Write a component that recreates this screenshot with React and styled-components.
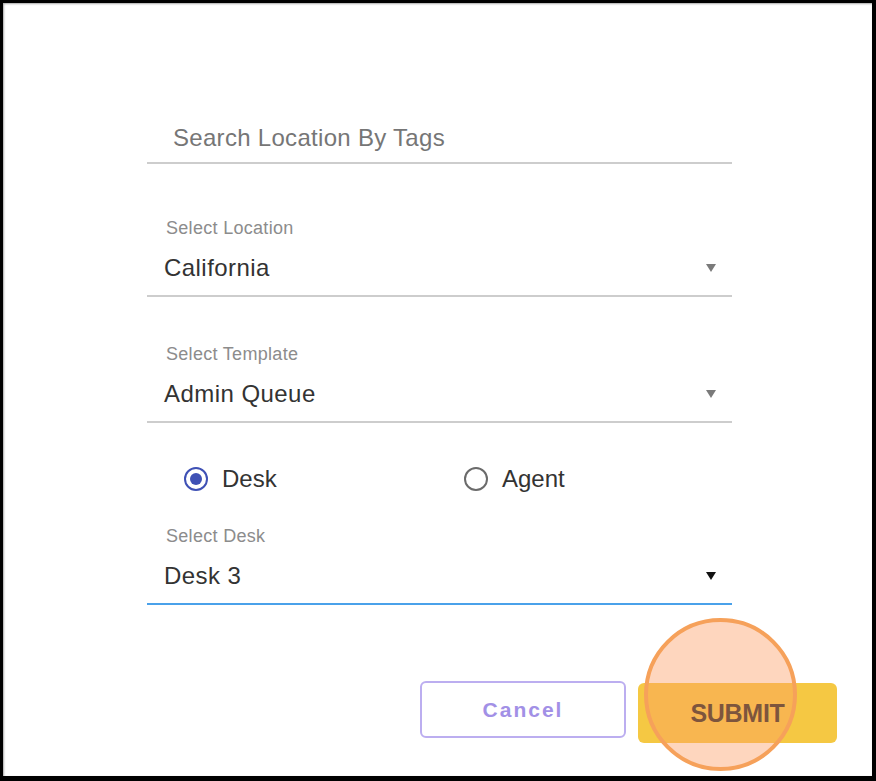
import React, { useState } from "react";
import styled, { createGlobalStyle } from "styled-components";

const GlobalStyle = createGlobalStyle`
  html, body {
    margin: 0;
    padding: 0;
    background: #fff;
  }
  * {
    box-sizing: border-box;
  }
`;

const Frame = styled.div`
  width: 876px;
  height: 781px;
  border-style: solid;
  border-color: #000;
  border-width: 3px 4px 5px 3px;
  box-shadow: inset 1px 1px 2px rgba(0, 0, 0, 0.35);
  background: #fff;
  font-family: "Liberation Sans", Arial, sans-serif;
  display: flex;
  flex-direction: column;
`;

const Form = styled.div`
  margin-left: 144px;
  width: 585px;
  padding-top: 121px;
  display: flex;
  flex-direction: column;
`;

const SearchField = styled.div`
  padding: 0 0 10px 26px;
  border-bottom: 2px solid #cdcdcd;
  height: 40px;
  font-size: 24px;
  line-height: 28px;
  letter-spacing: 0.3px;
  color: #767676;
`;

const Field = styled.div`
  margin-top: ${(p) => p.$gap}px;
  padding-bottom: 13px;
  border-bottom: 2px solid ${(p) => (p.$focused ? "#4aa1ea" : "#cdcdcd")};
`;

const Label = styled.div`
  padding-left: 19px;
  height: 20px;
  font-size: 18px;
  line-height: 20px;
  letter-spacing: 0.3px;
  color: #8c8c8c;
`;

const ValueRow = styled.div`
  margin-top: 16px;
  height: 28px;
  padding: 0 16px 0 17px;
  display: flex;
  align-items: center;
  justify-content: space-between;
  font-size: 24px;
  line-height: 28px;
  letter-spacing: 0.45px;
  color: #333;
`;

const Arrow = styled.svg`
  width: 10px;
  height: 8px;
  fill: ${(p) => (p.$dark ? "#111" : "#7a7a7a")};
`;

const RadioRow = styled.div`
  margin-top: 42px;
  height: 28px;
  padding-left: 37px;
  display: flex;
  align-items: center;
`;

const RadioOption = styled.label`
  flex: 0 0 ${(p) => p.$width}px;
  display: flex;
  align-items: center;
  gap: 14px;
  font-size: 24px;
  line-height: 28px;
  color: #333;
  cursor: pointer;
`;

const RadioCircle = styled.span`
  width: 24px;
  height: 24px;
  border-radius: 50%;
  border: 2px solid ${(p) => (p.$checked ? "#3f51b5" : "#6b6b6b")};
  display: flex;
  align-items: center;
  justify-content: center;
  &::after {
    content: "";
    width: 12px;
    height: 12px;
    border-radius: 50%;
    background: ${(p) => (p.$checked ? "#3f51b5" : "transparent")};
  }
`;

const Actions = styled.div`
  margin-top: 76px;
  padding-right: 35px;
  display: flex;
  justify-content: flex-end;
  align-items: flex-start;
  gap: 12px;
`;

const CancelButton = styled.button`
  width: 206px;
  height: 57px;
  border: 2px solid #bcaef0;
  border-radius: 6px;
  background: #fff;
  font-family: "Liberation Sans", Arial, sans-serif;
  font-size: 21px;
  font-weight: 700;
  letter-spacing: 2px;
  color: #a290e6;
  cursor: pointer;
`;

const SubmitButton = styled.button`
  position: relative;
  margin-top: 2px;
  width: 199px;
  height: 60px;
  border: none;
  border-radius: 6px;
  background: #f5c843;
  font-family: "Liberation Sans", Arial, sans-serif;
  font-size: 25px;
  font-weight: 700;
  letter-spacing: -0.3px;
  color: #222;
  cursor: pointer;
`;

const TapIndicator = styled.span`
  position: absolute;
  left: 6px;
  top: -65px;
  width: 153px;
  height: 153px;
  border-radius: 50%;
  border: 4px solid #f6a15a;
  background: rgba(252, 158, 100, 0.42);
  pointer-events: none;
`;

function SelectField({ label, value, gap, focused }) {
  return (
    <Field $gap={gap} $focused={focused}>
      <Label>{label}</Label>
      <ValueRow>
        <span>{value}</span>
        <Arrow viewBox="0 0 10 8" $dark={focused}>
          <polygon points="0,0 10,0 5,8" />
        </Arrow>
      </ValueRow>
    </Field>
  );
}

export default function App() {
  const [mode, setMode] = useState("desk");

  return (
    <>
      <GlobalStyle />
      <Frame>
        <Form>
          <SearchField>Search Location By Tags</SearchField>
          <SelectField label="Select Location" value="California" gap={54} />
          <SelectField label="Select Template" value="Admin Queue" gap={47} />
          <RadioRow>
            <RadioOption $width={280} onClick={() => setMode("desk")}>
              <RadioCircle $checked={mode === "desk"} />
              Desk
            </RadioOption>
            <RadioOption $width={200} onClick={() => setMode("agent")}>
              <RadioCircle $checked={mode === "agent"} />
              Agent
            </RadioOption>
          </RadioRow>
          <SelectField
            label={mode === "desk" ? "Select Desk" : "Select Agent"}
            value="Desk 3"
            gap={33}
            focused
          />
        </Form>
        <Actions>
          <CancelButton>Cancel</CancelButton>
          <SubmitButton>
            SUBMIT
            <TapIndicator />
          </SubmitButton>
        </Actions>
      </Frame>
    </>
  );
}
